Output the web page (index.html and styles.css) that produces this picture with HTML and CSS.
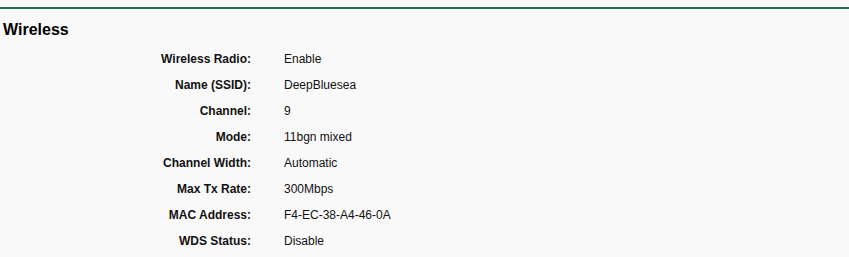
FILE: index.html
```html
<!DOCTYPE html>
<html lang="en">
  <head>
    <meta charset="UTF-8" />
    <title>Wireless</title>
    <link rel="stylesheet" href="styles.css">
  </head>
  <body>
    <div class="panel">
      <h2 class="panel-title">Wireless</h2>
      <table class="info">
        <tr><td class="label">Wireless Radio:</td><td class="value">Enable</td></tr>
        <tr><td class="label">Name (SSID):</td><td class="value">DeepBluesea</td></tr>
        <tr><td class="label">Channel:</td><td class="value">9</td></tr>
        <tr><td class="label">Mode:</td><td class="value">11bgn mixed</td></tr>
        <tr><td class="label">Channel Width:</td><td class="value">Automatic</td></tr>
        <tr><td class="label">Max Tx Rate:</td><td class="value">300Mbps</td></tr>
        <tr><td class="label">MAC Address:</td><td class="value">F4-EC-38-A4-46-0A</td></tr>
        <tr><td class="label">WDS Status:</td><td class="value">Disable</td></tr>
      </table>
    </div>
  </body>
</html>
```

FILE: styles.css
```css
* {
  box-sizing: border-box;
}
body {
  margin: 0;
  background-color: #f9f9f9;
  font-family: "Liberation Sans", Arial, sans-serif;
  color: #111;
}
.panel {
  padding-top: 7px;
}
.panel-title {
  margin: 0;
  padding: 12px 0 0 3px;
  height: 39px;
  border-top: 2px solid #2b6a4c;
  font-size: 16px;
  font-weight: bold;
  color: #000;
}
.info {
  border-collapse: collapse;
}
.info td {
  height: 26px;
  padding: 0;
  font-size: 12px;
  vertical-align: middle;
}
.label {
  width: 251px;
  text-align: right;
  font-weight: bold;
}
.value {
  padding-left: 33px !important;
}
```
